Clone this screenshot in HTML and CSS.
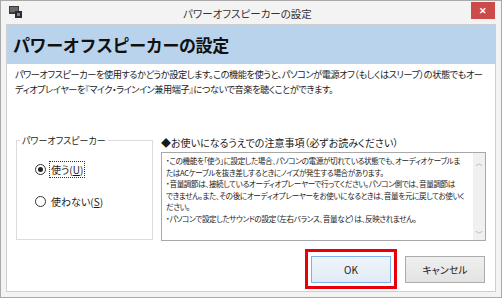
FILE: index.html
```html
<!DOCTYPE html>
<html lang="ja">

<head>
    <link rel="stylesheet" href="styles.css">
</head>

<body>
    <div class="window">
        <div class="titlebar">
            <svg class="titlebar__icon" width="13" height="12" viewBox="0 0 13 12">
                <rect x="0" y="0" width="10" height="8" fill="#3a3a3a" />
                <rect x="1" y="1" width="8" height="5" fill="#6b6b6b" />
                <rect x="6" y="5" width="7" height="7" fill="#2c2c2c" />
                <rect x="8" y="7" width="3" height="3" fill="#7d7bb5" />
            </svg>
            <div class="titlebar__title">パワーオフスピーカーの設定</div>
            <div class="titlebar__close">✕</div>
        </div>

        <div class="client">
            <div class="banner">パワーオフスピーカーの設定</div>

            <p class="desc">パワーオフスピーカーを使用するかどうか設定します。この機能を使うと、パソコンが電源オフ（もしくはスリープ）の状態でもオー<br>ディオプレイヤーを『マイク・ラインイン兼用端子』につないで音楽を聴くことができます。</p>

            <div class="main">
                <fieldset class="group">
                    <legend>パワーオフスピーカー</legend>
                    <div class="radio radio--checked">
                        <span class="radio__dot"></span>
                        <span class="radio__label radio__label--focus">使う(<u>U</u>)</span>
                    </div>
                    <div class="radio">
                        <span class="radio__dot"></span>
                        <span class="radio__label">使わない(<u>S</u>)</span>
                    </div>
                </fieldset>

                <div class="notice">
                    <div class="notice__title">◆お使いになるうえでの注意事項（必ずお読みください）</div>
                    <div class="notice__box">
                        <div class="notice__text">・この機能を「使う」に設定した場合、パソコンの電源が切れている状態でも、オーディオケーブルま<br>たはACケーブルを抜き差しするときにノイズが発生する場合があります。<br>・音量調節は、接続しているオーディオプレーヤーで行ってください。パソコン側では、音量調節は<br>できません。また、その後にオーディオプレーヤーをお使いになるときは、音量を元に戻してお使いく<br>ださい。<br>・パソコンで設定したサウンドの設定（左右バランス、音量など）は、反映されません。</div>
                        <div class="scrollbar">
                            <span class="scrollbar__arrow">︿</span>
                            <span class="scrollbar__arrow">﹀</span>
                        </div>
                    </div>
                </div>
            </div>

            <div class="buttons">
                <div class="highlight">
                    <button class="btn btn--default">OK</button>
                </div>
                <button class="btn">キャンセル</button>
            </div>
        </div>
    </div>
</body>

</html>
```

FILE: styles.css
```css
*,
*::after,
*::before {
    box-sizing: border-box;
}

body {
    margin: 0;
    width: 502px;
    height: 298px;
    font-family: "Noto Sans CJK JP", sans-serif;
    color: #1a1a1a;
    background: #fff;
}

.window {
    width: 502px;
    height: 298px;
    background: #f3f3f3;
    border: 1px solid #a9a9a9;
    padding: 0 5px 5px;
    display: flex;
    flex-direction: column;
}

.titlebar {
    height: 23px;
    display: flex;
    align-items: center;
    position: relative;
}

.titlebar__icon {
    margin-left: 3px;
    margin-top: -2px;
}

.titlebar__title {
    flex: 1;
    text-align: center;
    font-size: 10.5px;
    color: #333;
    font-feature-settings: "palt";
    padding-left: 2px;
    margin-top: 1px;
}

.titlebar__close {
    width: 24px;
    height: 17px;
    margin-top: -5px;
    margin-right: 1px;
    background: #cc4a4a;
    color: #fff;
    font-size: 9px;
    font-weight: bold;
    display: flex;
    align-items: center;
    justify-content: center;
}

.client {
    flex: 1;
    background: #fff;
    border: 1px solid #cfcfcf;
    display: flex;
    flex-direction: column;
}

.banner {
    height: 39px;
    background: #b9d3ec;
    font-size: 17px;
    font-weight: bold;
    color: #111;
    padding-left: 6px;
    display: flex;
    align-items: center;
    letter-spacing: -0.4px;
}

.desc {
    margin: 3px 8px 0;
    font-size: 9.2px;
    line-height: 15px;
    font-feature-settings: "palt";
    letter-spacing: -0.45px;
    white-space: nowrap;
    height: 67px;
}

.main {
    display: flex;
    padding: 0 9px 0 9px;
    gap: 8px;
}

.group {
    margin: 0;
    width: 137px;
    height: 106px;
    border: 1px solid #dcdcdc;
    padding: 14px 0 0 18px;
}

.group legend {
    font-size: 9px;
    font-feature-settings: "palt";
    padding: 0 2px;
    margin-left: -15px;
    color: #222;
}

.radio {
    display: flex;
    align-items: center;
    gap: 3px;
    height: 16px;
    margin-bottom: 16px;
    font-size: 10px;
    font-feature-settings: "palt";
}

.radio__dot {
    width: 11px;
    height: 11px;
    border: 1px solid #333;
    border-radius: 50%;
    display: flex;
    align-items: center;
    justify-content: center;
}

.radio--checked .radio__dot::after {
    content: "";
    width: 5px;
    height: 5px;
    border-radius: 50%;
    background: #222;
}

.radio__label {
    padding: 0 1px;
    border: 1px solid transparent;
}

.radio__label--focus {
    border: 1px dotted #333;
}

.notice {
    flex: 1;
    display: flex;
    flex-direction: column;
    padding-top: 1px;
}

.notice__title {
    font-size: 10px;
    font-feature-settings: "palt";
    height: 15px;
    margin-bottom: 2px;
}

.notice__box {
    width: 325px;
    height: 89px;
    border: 1px solid #a8a8a8;
    display: flex;
}

.notice__text {
    flex: 1;
    padding: 2px 4px;
    font-size: 7.6px;
    line-height: 11.5px;
    font-feature-settings: "palt";
    letter-spacing: -0.38px;
    white-space: nowrap;
    overflow: hidden;
    color: #222;
}

.scrollbar {
    width: 12px;
    background: #f0f0f0;
    display: flex;
    flex-direction: column;
    justify-content: space-between;
    align-items: center;
    font-size: 7px;
    color: #a0a0a0;
    padding: 4px 0 1px;
}

.buttons {
    display: flex;
    justify-content: flex-end;
    align-items: center;
    gap: 8px;
    padding: 8px 10px 0 0;
}

.highlight {
    border: 3px solid #e8000b;
    padding: 3px;
}

.btn {
    width: 80px;
    height: 27px;
    font-family: "Noto Sans CJK JP", sans-serif;
    font-size: 10px;
    font-feature-settings: "palt";
    color: #222;
    background: linear-gradient(#efefef, #e3e3e3);
    border: 1px solid #acacac;
    padding: 0;
}

.btn--default {
    border: 1px solid #7eb4ea;
    background: linear-gradient(#eef4fb, #e2ebf5);
}
```
